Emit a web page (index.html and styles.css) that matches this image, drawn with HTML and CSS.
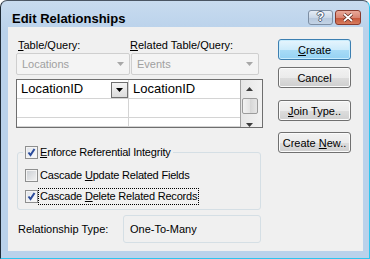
FILE: index.html
```html
<!DOCTYPE html>
<html lang="en">
<head>
    <meta charset="UTF-8">
    <title>Edit Relationships</title>
    <link rel="stylesheet" href="styles.css">
</head>
<body>
    <div class="window">
        <div class="titlebar">
            <span class="title">Edit Relationships</span>
            <div class="caption-btns">
                <span class="cap-btn help">?</span>
                <span class="cap-btn close">
                    <svg width="12" height="9" viewBox="0 0 12 9">
                        <path d="M2 1 L10 8 M10 1 L2 8" stroke="#5a2418" stroke-width="3.2" fill="none"/>
                        <path d="M2 1 L10 8 M10 1 L2 8" stroke="#ffffff" stroke-width="1.8" fill="none"/>
                    </svg>
                </span>
            </div>
        </div>

        <div class="client">
            <div class="left-pane">
                <div class="pickers">
                    <span class="pick-label"><u>T</u>able/Query:</span>
                    <span class="pick-label rel"><u>R</u>elated Table/Query:</span>
                    <div class="combo">
                        <span>Locations</span>
                        <svg class="combo-arrow" width="7" height="4" viewBox="0 0 7 4"><path d="M0 0 H7 L3.5 4 Z" fill="#a8a8a8"/></svg>
                    </div>
                    <div class="combo">
                        <span>Events</span>
                        <svg class="combo-arrow" width="7" height="4" viewBox="0 0 7 4"><path d="M0 0 H7 L3.5 4 Z" fill="#a8a8a8"/></svg>
                    </div>
                </div>

                <div class="fields">
                    <div class="cell first">
                        <span>LocationID</span>
                        <span class="drop-btn">
                            <svg width="7" height="4" viewBox="0 0 7 4"><path d="M0 0 H7 L3.5 4 Z" fill="#000"/></svg>
                        </span>
                    </div>
                    <div class="cell">LocationID</div>
                    <div class="vscroll">
                        <div class="arrow-up">
                            <svg width="7" height="4" viewBox="0 0 7 4"><path d="M0 4 H7 L3.5 0 Z" fill="#3c3c3c"/></svg>
                        </div>
                        <div class="thumb"></div>
                        <div class="arrow-down">
                            <svg width="7" height="4" viewBox="0 0 7 4"><path d="M0 0 H7 L3.5 4 Z" fill="#3c3c3c"/></svg>
                        </div>
                    </div>
                    <div class="cell first"></div>
                    <div class="cell"></div>
                    <div class="cell first"></div>
                    <div class="cell"></div>
                </div>

                <fieldset class="integrity">
                    <legend>
                        <span class="check on">
                            <svg width="11" height="11" viewBox="0 0 11 11"><path d="M2.5 5.5 L4.5 8 L8.5 2" stroke="#2a4b9b" stroke-width="2" fill="none"/></svg>
                        </span>
                        <span><u>E</u>nforce Referential Integrity</span>
                    </legend>
                    <div class="opt">
                        <span class="check"></span>
                        <span>Cascade <u>U</u>pdate Related Fields</span>
                    </div>
                    <div class="opt">
                        <span class="check on">
                            <svg width="11" height="11" viewBox="0 0 11 11"><path d="M2.5 5.5 L4.5 8 L8.5 2" stroke="#2a4b9b" stroke-width="2" fill="none"/></svg>
                        </span>
                        <span class="focused">Cascade <u>D</u>elete Related Records</span>
                    </div>
                </fieldset>

                <div class="rel-type">
                    <span class="rel-label">Relationship Type:</span>
                    <div class="rel-value">One-To-Many</div>
                </div>
            </div>

            <div class="actions">
                <button class="btn default"><u>C</u>reate</button>
                <button class="btn">Cancel</button>
                <button class="btn join"><u>J</u>oin Type..</button>
                <button class="btn">Create <u>N</u>ew..</button>
            </div>
        </div>
    </div>
</body>
</html>
```
FILE: styles.css
```css
html, body {
    margin: 0;
    padding: 0;
    width: 370px;
    height: 259px;
    overflow: hidden;
    background-color: #ffffff;
}
.window {
    box-sizing: border-box;
    width: 370px;
    height: 259px;
    display: flex;
    flex-direction: column;
    border-top: 1px solid #4a5563;
    border-left: 1px solid #1e2a36;
    border-right: 1px solid #2ec6ef;
    border-bottom: 1px solid #2ec6ef;
    border-radius: 7px 7px 0 0;
    background: linear-gradient(#c8dbef, #bad2eb 30px);
    font-family: "Liberation Sans", Arial, sans-serif;
    font-size: 11px;
    color: #000;
}
.titlebar {
    height: 26px;
    display: flex;
    align-items: flex-start;
    padding: 0 8px 0 11px;
}
.title {
    font-size: 13px;
    font-weight: bold;
    line-height: 15px;
    margin-top: 10px;
}
.caption-btns {
    margin-left: auto;
    margin-top: 9px;
    display: flex;
    gap: 2px;
}
.cap-btn {
    box-sizing: border-box;
    height: 15px;
    width: 25px;
    border-radius: 3px;
    display: flex;
    align-items: center;
    justify-content: center;
}
.help {
    border: 1px solid #7d8ea3;
    background: linear-gradient(#e4ecf5, #cad8e8 50%, #b6c8dd 51%, #c3d3e5);
    color: #fff;
    font-weight: bold;
    font-size: 12px;
    line-height: 13px;
    text-shadow: 1px 0 0 #4d5f76, -1px 0 0 #4d5f76, 0 1px 0 #4d5f76, 0 -1px 0 #4d5f76;
}
.close {
    width: 26px;
    border: 1px solid #8a3a2c;
    background: linear-gradient(#e9a999, #d98673 50%, #c55438 51%, #d67c5e);
}

.client {
    flex: 1;
    margin: 0 6px 7px 7px;
    background-color: #f0f0f0;
    display: flex;
    padding: 12px 0 0 8px;
}
.left-pane {
    width: 247px;
}
.pickers {
    display: grid;
    grid-template-columns: 114px 128px;
    column-gap: 1px;
    row-gap: 1px;
}
.pick-label {
    line-height: 13px;
    padding-left: 2px;
}
.pick-label.rel {
    padding-left: 0;
    margin-left: -1px;
}
.combo {
    box-sizing: border-box;
    height: 22px;
    border: 1px solid #cfcfcf;
    border-radius: 2px;
    background-color: #f4f4f4;
    color: #a0a0a0;
    display: flex;
    align-items: center;
    padding: 0 5px;
}
.combo-arrow {
    margin-left: auto;
}

.fields {
    margin-top: 4px;
    box-sizing: border-box;
    height: 49px;
    border: 1px solid #6e6e6e;
    background-color: #ffffff;
    display: grid;
    grid-template-columns: 112px 111px 22px;
    grid-template-rows: 19px 19px 9px;
    overflow: hidden;
    font-size: 13px;
}
.cell {
    box-sizing: border-box;
    border-bottom: 1px solid #d4d4d4;
    padding-left: 4px;
    line-height: 18px;
    display: flex;
}
.cell.first {
    border-right: 1px solid #d4d4d4;
}
.drop-btn {
    box-sizing: border-box;
    margin-left: auto;
    margin-top: 2px;
    width: 17px;
    height: 16px;
    border: 1px solid #707070;
    background: linear-gradient(#f4f4f4, #dcdcdc);
    display: flex;
    align-items: center;
    justify-content: center;
}
.vscroll {
    grid-column: 3;
    grid-row: 1 / span 3;
    border-left: 1px solid #a0a0a0;
    background: linear-gradient(90deg, #e6e6e6, #f2f2f2);
    display: flex;
    flex-direction: column;
    align-items: flex-start;
}
.arrow-up {
    height: 19px;
    width: 17px;
    display: flex;
    align-items: center;
    justify-content: center;
}
.thumb {
    box-sizing: border-box;
    margin-left: 1px;
    width: 16px;
    height: 16px;
    border: 1px solid #9b9b9b;
    border-radius: 2px;
    background: linear-gradient(90deg, #f2f2f2, #e4e4e4 50%, #d6d6d6 51%, #e6e6e6);
}
.arrow-down {
    height: 14px;
    width: 17px;
    display: flex;
    align-items: flex-end;
    justify-content: center;
}

.integrity {
    margin: 18px 2px 0 1px;
    padding: 10px 0 6px 7px;
    border: 1px solid #d5dfe5;
    border-radius: 3px;
    letter-spacing: -0.2px;
}
.integrity legend {
    padding: 0 2px;
    margin-left: -2px;
    display: flex;
    align-items: center;
    gap: 2px;
    line-height: 13px;
}
.opt {
    display: flex;
    align-items: center;
    gap: 2px;
    line-height: 13px;
}
.opt + .opt {
    margin-top: 8px;
}
.check {
    box-sizing: border-box;
    width: 13px;
    height: 13px;
    border: 1px solid #8e8f8f;
    background: linear-gradient(135deg, #c9cdd2, #f4f4f4);
    box-shadow: inset 0 0 0 1px #f4f4f4;
    display: flex;
    align-items: center;
    justify-content: center;
}
.check.on {
    background: linear-gradient(135deg, #dfe3ea, #fbfbfb);
}
.focused {
    outline: 1px dotted #000;
    outline-offset: 1px;
}

.rel-type {
    margin-top: 5px;
    display: flex;
    align-items: center;
}
.rel-label {
    padding-left: 2px;
}
.rel-value {
    box-sizing: border-box;
    margin-left: auto;
    margin-right: 2px;
    width: 138px;
    height: 28px;
    border: 1px solid #d5dfe5;
    border-radius: 3px;
    padding-left: 6px;
    display: flex;
    align-items: center;
}

.actions {
    margin-left: 15px;
    width: 73px;
    display: flex;
    flex-direction: column;
}
.btn {
    box-sizing: border-box;
    width: 73px;
    height: 21px;
    padding: 0;
    border: 1px solid #707070;
    border-radius: 3px;
    background: linear-gradient(#f2f2f2, #ebebeb 50%, #dddddd 51%, #cfcfcf);
    box-shadow: inset 0 0 0 1px #fbfbfb;
    font-family: "Liberation Sans", Arial, sans-serif;
    font-size: 11px;
    color: #000;
    margin-bottom: 11px;
}
.btn.default {
    border-color: #3c7fb1;
    background: linear-gradient(#e6f5fd, #cdebfb 50%, #a9dcf7 51%, #95d2f3);
    box-shadow: inset 0 0 0 1px #c8ecfd;
    margin-bottom: 7px;
}
.btn.join {
    margin-top: 1px;
}
```
